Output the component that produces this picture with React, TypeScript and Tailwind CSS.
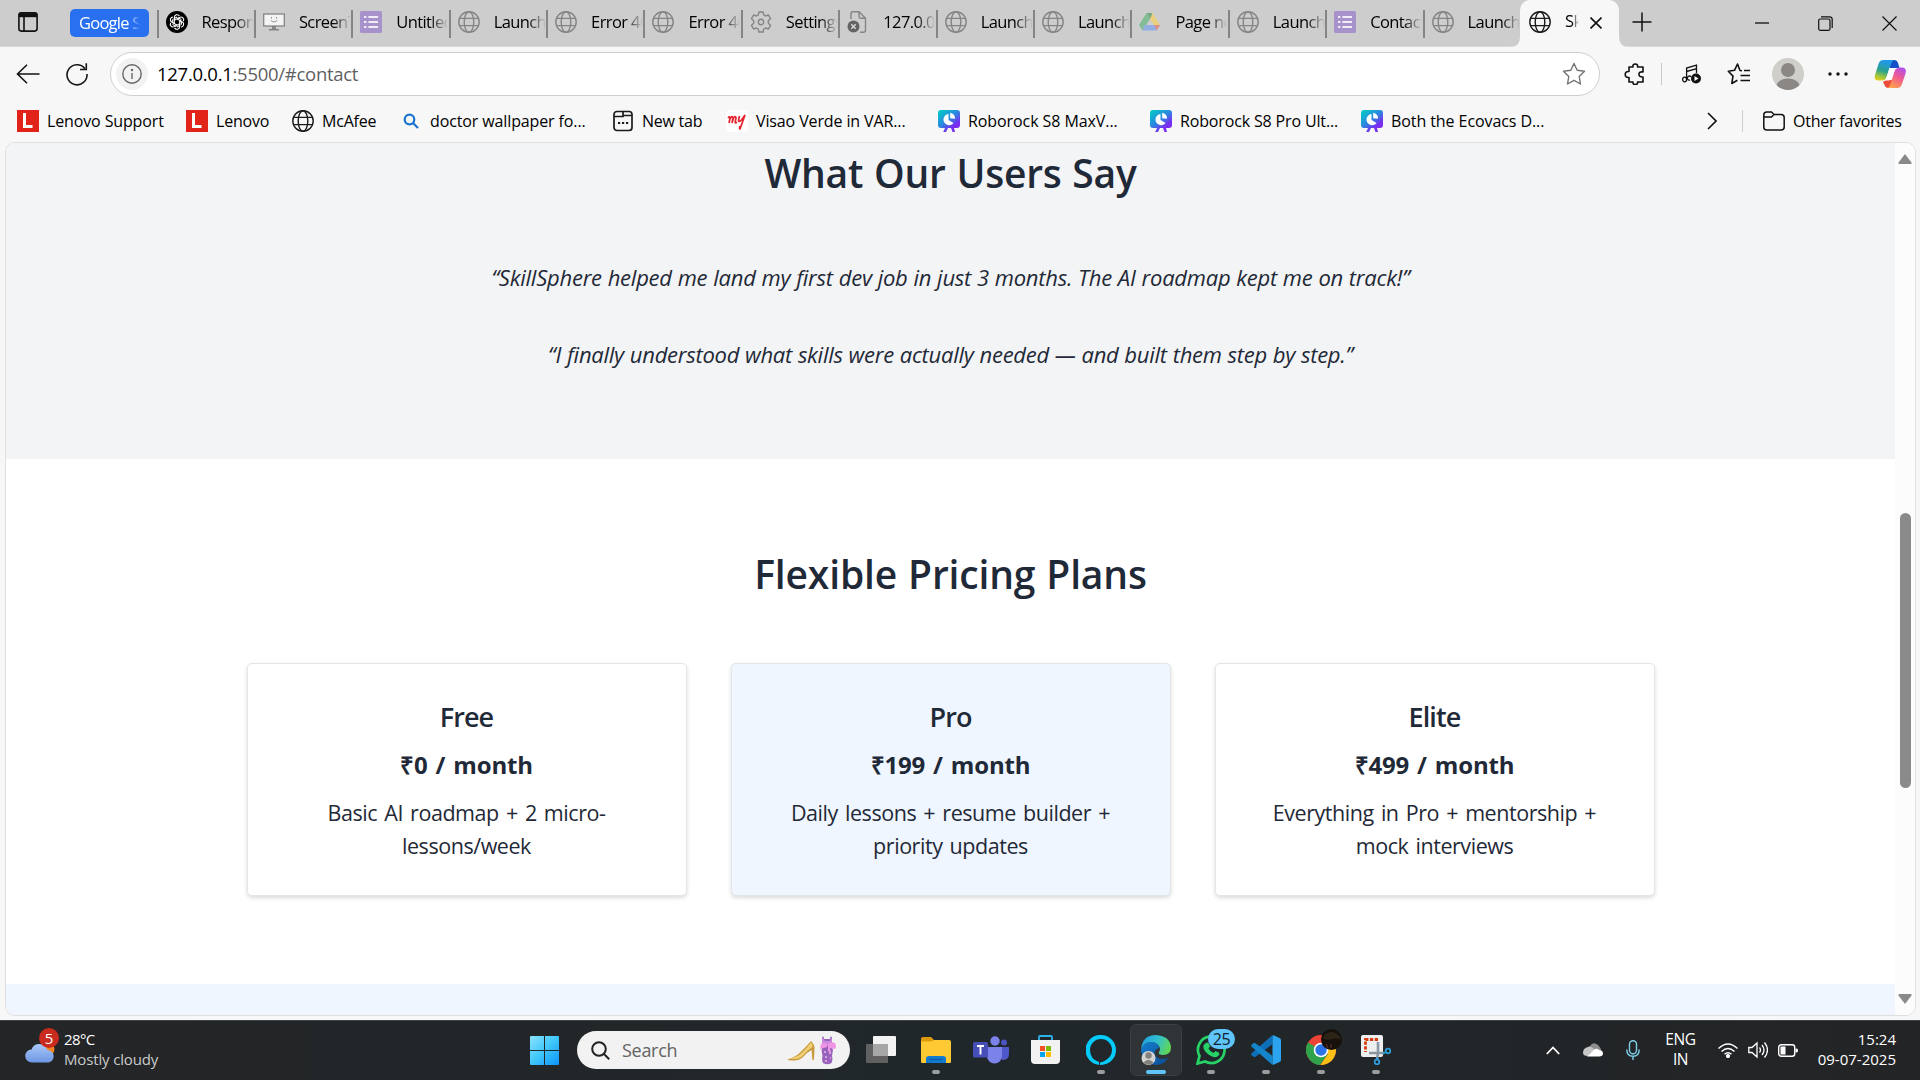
import type { ReactNode } from "react";

type IconProps = { className?: string };

const Globe = ({ className = "" }: IconProps) => (
  <svg viewBox="0 0 22 22" className={`size-[22px] shrink-0 ${className}`} fill="none" stroke="currentColor" strokeWidth="1.4">
    <circle cx="11" cy="11" r="10.2" />
    <ellipse cx="11" cy="11" rx="4.8" ry="10.2" />
    <path d="M1.6 7.4h18.8M1.6 14.6h18.8" />
  </svg>
);

const FormIcon = () => (
  <svg viewBox="0 0 22 22" className="size-[22px] shrink-0">
    <rect width="22" height="22" rx="1.5" fill="#a792cb" />
    <path d="M4 6h2.4M4 11h2.4M4 16h2.4M8.4 6H18M8.4 11H18M8.4 16H18" stroke="#f1ecf8" strokeWidth="2.2" />
  </svg>
);

const GptIcon = () => (
  <svg viewBox="0 0 22 22" className="size-[22px] shrink-0">
    <circle cx="11" cy="11" r="11" fill="#000" />
    <g fill="none" stroke="#fff" strokeWidth="1.1">
      {[0, 60, 120, 180, 240, 300].map((a) => (
        <path key={a} transform={`rotate(${a} 11 11)`} d="M8.4 9.5V6.3c0-2.6 3.6-3.6 5-1.2M8.4 9.4l4.2-2.5 2.9 1.7" />
      ))}
    </g>
  </svg>
);

const ScreenIcon = () => (
  <svg viewBox="0 0 22 22" className="size-[22px] shrink-0">
    <rect x=".7" y="3" width="20.6" height="12" fill="#f4f4f4" stroke="#848484" strokeWidth="1.3" />
    <path d="M9 15h4v3h3v1.5H6V18h3z" fill="#848484" />
    <path d="M8.5 6v1.6M13.5 6v1.6M8 9.3c1 2 5 2 6 0" stroke="#8d8d8d" fill="none" />
  </svg>
);

const GearIcon = () => (
  <svg viewBox="0 0 22 22" className="size-[22px] shrink-0" fill="none" stroke="#858585" strokeWidth="1.4" strokeLinejoin="round">
    <path d="M8.9 1h4.2l.6 2.9 1.9 1.1 2.8-1 2.1 3.7-2.2 2v2.6l2.2 2-2.1 3.7-2.8-1-1.9 1.1-.6 2.9H8.9l-.6-2.9L6.4 17l-2.8 1-2.1-3.7 2.2-2V9.7l-2.2-2L3.6 4l2.8 1 1.9-1.1z" />
    <circle cx="11" cy="11" r="2.7" />
  </svg>
);

const BrokenPage = () => (
  <svg viewBox="0 0 22 22" className="size-[22px] shrink-0" fill="none" stroke="#858585" strokeWidth="1.4">
    <path d="M4 8V2.5Q4 .8 5.7.8H12l6.5 6.5v12q0 2-2 2H13M12 .8v4.8q0 1.700 1.700 1.700h4.800" />
    <circle cx="6.500" cy="15.500" r="6" fill="#636363" stroke="none" />
    <path d="m4.300 13.300 4.400 4.400m0-4.400-4.400 4.400" stroke="#d8d8d8" />
  </svg>
);

const DriveIcon = () => (
  <svg viewBox="0 0 22 22" className="size-[22px] shrink-0">
    <path d="M7.500 2h6l7.500 12h-6z" fill="#ead07e" />
    <path d="M7.500 2 0 14l3.500 5.500L11 8z" fill="#83bd95" />
    <path d="M5.500 14H21l-3.500 5.500h-14z" fill="#92aee2" />
    <path d="M15 14h6l-3.200 5.200z" fill="#dc8f87" />
    <path d="M7.500 2h6L11 8z" fill="#78a987" />
  </svg>
);

const LenovoIcon = () => (
  <div className="flex size-[22px] shrink-0 items-center justify-center bg-[#e2231a]">
    <svg viewBox="0 0 12 16" className="h-4 w-3">
      <path d="M2.500 0v13.500h8" fill="none" stroke="#fff" strokeWidth="3" />
    </svg>
  </div>
);

const RoboIcon = () => (
  <svg viewBox="0 0 22 22" className="size-[22px] shrink-0">
    <defs>
      <linearGradient id="robo" x1="0" y1="0" x2=".8" y2="1">
        <stop offset="0" stopColor="#00d2c4" />
        <stop offset=".5" stopColor="#2b86e0" />
        <stop offset=".8" stopColor="#7a2cf0" />
      </linearGradient>
    </defs>
    <path d="M3 0h16q3 0 3 3v12q0 3-3 3h-3l1 4h-2.500L13 18h-3l-2 4H5.200L7 18H3q-3 0-3-3V3q0-3 3-3z" fill="url(#robo)" />
    <path d="M10.500 4v6l5 3A5.600 5.600 0 1 1 10.500 4z" fill="#fff" />
    <path d="M12.200 2.800a5.600 5.600 0 0 1 4.800 6l-4.800-.5z" fill="#fff" />
  </svg>
);

const tabs: { icon: ReactNode; label: string }[] = [
  { icon: <GptIcon />, label: "Respons" },
  { icon: <ScreenIcon />, label: "ScreenTo" },
  { icon: <FormIcon />, label: "Untitled" },
  { icon: <Globe className="text-[#858585]" />, label: "Launchp" },
  { icon: <Globe className="text-[#858585]" />, label: "Error 404" },
  { icon: <Globe className="text-[#858585]" />, label: "Error 404" },
  { icon: <GearIcon />, label: "Settings" },
  { icon: <BrokenPage />, label: "127.0.0.1" },
  { icon: <Globe className="text-[#858585]" />, label: "Launchp" },
  { icon: <Globe className="text-[#858585]" />, label: "Launchp" },
  { icon: <DriveIcon />, label: "Page not" },
  { icon: <Globe className="text-[#858585]" />, label: "Launchp" },
  { icon: <FormIcon />, label: "Contact" },
  { icon: <Globe className="text-[#858585]" />, label: "Launchp" },
];

const TabStrip = () => (
  <div className="flex h-[47px] items-stretch border-b border-[#d9d9d9] bg-[#cdcdcd] text-[16.500px] tracking-[-0.600px] text-black">
    <div className="flex w-[70px] items-center pl-[18px]">
      <svg viewBox="0 0 20 20" className="mt-[-2px] size-5" fill="none" stroke="#111" strokeWidth="1.600">
        <rect x=".9" y=".9" width="18.200" height="18.200" rx="2.500" />
        <path d="M1 3.200h18" strokeWidth="4" />
        <path d="M6 4v15" />
      </svg>
    </div>
    <div className="flex w-[86.500px] items-center">
      <div className="mt-[-1px] h-7 w-[79px] overflow-hidden rounded-[5px] bg-[#2970f0] pl-[9px] leading-[27px] whitespace-nowrap text-white">
        <span className="inline-block w-[61px] overflow-hidden mask-r-from-80% mask-r-to-100% tracking-[-0.750px]">Google S</span>
      </div>
    </div>
    {tabs.map((t, i) => (
      <div key={i} className="flex w-[97.400px] shrink-0 items-center">
        <div className="mt-[2px] h-7 w-0.5 shrink-0 bg-[#858585]" />
        <div className="-mt-0.5 ml-[7px]">{t.icon}</div>
        <div className="-mt-0.5 ml-[14px] w-[52px] shrink-0 overflow-hidden mask-r-from-65% mask-r-to-100% whitespace-nowrap">{t.label}</div>
      </div>
    ))}
    <div className="relative -mb-px flex w-[99px] shrink-0 items-center rounded-t-[10px] bg-[#f7f7f7] pl-[9px]">
      <svg viewBox="0 0 10 10" className="absolute bottom-0 -left-2.5 size-2.5"><path d="M10 0v10H0Q10 10 10 0z" fill="#f7f7f7" /></svg>
      <svg viewBox="0 0 10 10" className="absolute -right-2.5 bottom-0 size-2.5"><path d="M0 0v10h10Q0 10 0 0z" fill="#f7f7f7" /></svg>
      <Globe className="-mt-1 text-[#1b1b1b]" />
      <div className="-mt-1 ml-[14px] w-[14px] overflow-hidden mask-r-from-50% mask-r-to-100%">Skill</div>
      <svg viewBox="0 0 12 12" className="-mt-px ml-[11px] size-3" stroke="#111" strokeWidth="1.600"><path d="m.5.5 11 11m0-11-11 11" /></svg>
    </div>
    <div className="flex flex-1 items-center">
      <svg viewBox="0 0 20 20" className="-mt-0.5 ml-[13px] size-5" stroke="#111" strokeWidth="1.500"><path d="M10 .5v19M.5 10h19" /></svg>
      <svg viewBox="0 0 14 14" className="ml-[103px] size-3.5" stroke="#111" strokeWidth="1.300"><path d="M0 7h14" /></svg>
      <svg viewBox="0 0 15 15" className="ml-[49px] size-[15px]" fill="none" stroke="#111" strokeWidth="1.200">
        <rect x=".7" y="3" width="11.300" height="11.300" rx="1.500" /><path d="M3 .8h8.500q2.700 0 2.700 2.700V12" />
      </svg>
      <svg viewBox="0 0 15 15" className="ml-[49px] size-[15px]" stroke="#111" strokeWidth="1.200"><path d="m.5.5 14 14m0-14-14 14" /></svg>
    </div>
  </div>
);

const CopilotIcon = () => (
  <svg viewBox="0 0 32 30" className="h-[30px] w-8">
    <defs>
      <linearGradient id="cp1" x1=".3" y1="0" x2="0" y2="1"><stop offset="0" stopColor="#2098e8" /><stop offset=".45" stopColor="#2ba18d" /><stop offset=".75" stopColor="#a3c83a" /><stop offset="1" stopColor="#f8d012" /></linearGradient>
      <linearGradient id="cp2" x1=".8" y1="0" x2=".3" y2="1"><stop offset="0" stopColor="#b04ff0" /><stop offset=".45" stopColor="#ee5a92" /><stop offset="1" stopColor="#ffa04a" /></linearGradient>
    </defs>
    <path d="M12 21l-3 2 1.500 3q1 3 4 3H17l2-8z" fill="#ea4b3a" />
    <path d="M16 1h4q3 0 4 3l1.500 5H16z" fill="#1650c8" />
    <path d="M9.500 1H20q-2 1-3 4l-4.500 13q-1 3.500-4 3.500H4.500Q-.5 21.500 1 16L4.500 5q1.200-4 5-4z" fill="url(#cp1)" />
    <path d="M23 29H13.500q2-1 3-4l4-13q1-3.500 4-3.500h3.500q5 0 3.500 6L28 25q-1.200 4-5 4z" fill="url(#cp2)" />
    <path d="M16 9h8.500q-3 0-4 3l-2.500 7q-1 2.500-3.500 2.500H8.500q3 0 4-3L15 10.500q.3-1.500 1-1.500z" fill="#fff" />
  </svg>
);

const Toolbar = () => (
  <div className="flex h-[54px] items-center bg-[#f7f7f7]">
    <svg viewBox="0 0 24 20" className="ml-4 h-5 w-6" fill="none" stroke="#151515" strokeWidth="1.600"><path d="M23.500 10H2M11 .8 1.500 10l9.500 9.200" /></svg>
    <svg viewBox="0 0 24 24" className="ml-[25px] size-6" fill="none" stroke="#151515" strokeWidth="1.600"><path d="M19.800 6.500A10 10 0 1 0 22 12M21.300 1.200v6.300H15" /></svg>
    <div className="ml-[21px] flex h-[44px] w-[1490px] items-center rounded-full border border-[#cfcfcf] bg-white">
      <div className="ml-[5px] flex size-8 items-center justify-center rounded-full bg-[#f2f2f2]">
        <svg viewBox="0 0 20 20" className="size-5" fill="none" stroke="#666" strokeWidth="1.400"><circle cx="10" cy="10" r="9.200" /><path d="M10 9v6" /><circle cx="10" cy="6" r=".5" fill="#666" /></svg>
      </div>
      <div className="ml-[9px] flex-1 text-[18.500px] tracking-[-0.280px] text-[#5f5f5f]"><span className="text-black">127.0.0.1</span>:5500/#contact</div>
      <svg viewBox="0 0 24 24" className="mr-[13px] size-6" fill="none" stroke="#737373" strokeWidth="1.400" strokeLinejoin="round"><path d="m12 1.500 3.200 6.800 7.300 1-5.300 5.200 1.300 7.500-6.500-3.600L5.500 22l1.300-7.500L1.500 9.300l7.300-1z" /></svg>
    </div>
    <svg viewBox="0 0 22 22" className="ml-[24px] size-[22px]" fill="none" stroke="#111" strokeWidth="1.600" strokeLinejoin="round">
      <path d="M5 4h4q-.5-3 2.300-3T13.500 4H19v5q-4-.6-4 2.300T19 14v5h-5.500q.5 2.500-2.200 2.500T9 19H5v-4.500q-3.800.4-3.800-3T5 8.500z" />
    </svg>
    <div className="ml-[15px] h-[22px] w-px bg-[#c8c8c8]" />
    <svg viewBox="0 0 20 20" className="ml-[20px] size-5" fill="none" stroke="#111" strokeWidth="1.300">
      <ellipse cx="2.600" cy="15.500" rx="2" ry="2.300" /><path d="M4.600 15.500V4L14.500 1.200v8M4.600 7.500l9.900-2.800" /><path d="M8 16a2 2 0 1 1 1-3" />
      <circle cx="14" cy="14.500" r="5" fill="#111" stroke="none" /><path d="m12.500 12 4 2.500-4 2.500z" fill="#fff" stroke="none" />
    </svg>
    <svg viewBox="0 0 24 24" className="ml-[25px] size-6" fill="none" stroke="#111" strokeWidth="1.600" strokeLinejoin="round">
      <path d="M15 8.800 13 8.500 10.500 2 7.500 8.300 1.300 9.200l4.700 4.900-1.200 7.400 5.600-3.200M17 8.500h6M13.500 13.500H23M13.500 18.500H23" />
    </svg>
    <svg viewBox="0 0 32 32" className="ml-[21px] size-8"><defs><clipPath id="av"><circle cx="16" cy="16" r="16" /></clipPath></defs><g clipPath="url(#av)"><rect width="32" height="32" fill="#d0cecb" /><circle cx="16" cy="12" r="7" fill="#8a8784" /><ellipse cx="16" cy="28" rx="11.500" ry="7.500" fill="#8a8784" /></g></svg>
    <svg viewBox="0 0 20 4" className="ml-[24px] h-1 w-5" fill="#111"><circle cx="2" cy="2" r="1.700" /><circle cx="10" cy="2" r="1.700" /><circle cx="18" cy="2" r="1.700" /></svg>
    <div className="ml-[26px]"><CopilotIcon /></div>
  </div>
);

const Bookmark = ({ icon, label, box }: { icon: ReactNode; label: string; box: string }) => (
  <div className={`flex shrink-0 items-center gap-2 whitespace-nowrap ${box}`}>{icon}<span>{label}</span></div>
);

const Bookmarks = () => (
  <div className="flex h-[41px] items-center bg-[#f7f7f7] pb-[2px] pl-[17px] text-[16px] text-black">
    <Bookmark box="w-[169px] tracking-[-0.130px]" icon={<LenovoIcon />} label="Lenovo Support" />
    <Bookmark box="w-[106px] tracking-[-0.200px]" icon={<LenovoIcon />} label="Lenovo" />
    <Bookmark box="w-[109px] tracking-[-0.200px]" icon={<Globe className="text-[#1b1b1b]" />} label="McAfee" />
    <Bookmark
      box="w-[211px] tracking-[-0.120px]"
      icon={<svg viewBox="0 0 21 22" className="h-[22px] w-[21px] shrink-0" fill="none" stroke="#1b74cf" strokeWidth="2.200"><circle cx="8.500" cy="9.500" r="4.800" /><path d="m12 13 5 5" /></svg>}
      label="doctor wallpaper fo..."
    />
    <Bookmark
      box="w-[114px] tracking-[-0.250px]"
      icon={<svg viewBox="0 0 22 22" className="size-[22px] shrink-0" fill="none" stroke="#1b1b1b" strokeWidth="1.700"><rect x="2" y="1.500" width="18" height="19" rx="3" /><path d="M2 6.500h9V2M11 5.500h9" /><path d="M6 13h2.200M10 13h2.200M14 13h2.200" strokeWidth="2.200" /></svg>}
      label="New tab"
    />
    <Bookmark
      box="w-[212px] tracking-[-0.120px]"
      icon={<svg viewBox="0 0 22 22" className="size-[22px] shrink-0"><rect width="22" height="22" rx="4" fill="#fff" /><path d="M2 8q2-2.500 2 .500L3 13l1-4q2-4 3-1l-1 5 1.500-5q2-3 2.500 0l-.8 4q0 2 1.800 0M13.500 6l-1 4.500q.5 2 3-.5l3.500-5L14 19q-1 0 0-3" fill="none" stroke="#e5232e" strokeWidth="1.700" /></svg>}
      label="Visao Verde in VAR..."
    />
    <Bookmark box="w-[212px] tracking-[-0.080px]" icon={<RoboIcon />} label="Roborock S8 MaxV..." />
    <Bookmark box="w-[211px] tracking-[-0.150px]" icon={<RoboIcon />} label="Roborock S8 Pro Ult..." />
    <Bookmark box="w-[346px] tracking-[-0.080px]" icon={<RoboIcon />} label="Both the Ecovacs D..." />
    <svg viewBox="0 0 10 18" className="h-[18px] w-2.5" fill="none" stroke="#111" strokeWidth="1.600"><path d="m1 1 8 8-8 8" /></svg>
    <div className="ml-[25px] h-[22px] w-px bg-[#d0d0d0]" />
    <svg viewBox="0 0 22 20" className="ml-[20px] h-5 w-[22px]" fill="none" stroke="#111" strokeWidth="1.500"><path d="M.8 4q0-3 3-3h4.700l2.500 2.500h7q3.200 0 3.200 3V16q0 3-3.200 3H3.800q-3 0-3-3zM.8 6h7.700L11 3.500" /></svg>
    <span className="ml-[8px] tracking-[-0.250px] whitespace-nowrap">Other favorites</span>
  </div>
);

const plans = [
  { name: "Free", price: "₹0 / month", desc: ["Basic AI roadmap + 2 micro-", "lessons/week"], bg: "bg-white" },
  { name: "Pro", price: "₹199 / month", desc: ["Daily lessons + resume builder +", "priority updates"], bg: "bg-[#eff6ff]" },
  { name: "Elite", price: "₹499 / month", desc: ["Everything in Pro + mentorship +", "mock interviews"], bg: "bg-white" },
];

const Page = () => (
  <main className="flex-1 text-center text-[#1f2937]">
    <section className="h-[316px] bg-[#f3f4f6] pt-[5px]">
      <h2 className="text-[39px] leading-[50px] font-semibold tracking-[-0.250px] [word-spacing:1px]">What Our Users Say</h2>
      <p className="mt-[62px] text-[22px] leading-[34px] tracking-[-0.240px] italic [word-spacing:0.400px]">“SkillSphere helped me land my first dev job in just 3 months. The AI roadmap kept me on track!”</p>
      <p className="mt-[43px] text-[22px] leading-[34px] tracking-[-0.260px] italic [word-spacing:0.400px]">“I finally understood what skills were actually needed — and built them step by step.”</p>
    </section>
    <section className="h-[525px] bg-white pt-[90px]">
      <h2 className="text-[39px] leading-[50px] font-semibold tracking-[-0.150px] [word-spacing:1px]">Flexible Pricing Plans</h2>
      <div className="mt-[64px] flex justify-center gap-11">
        {plans.map((p) => (
          <div key={p.name} className={`h-[233px] w-[440px] rounded-[5px] border border-[#e3e5e8] pt-[33px] shadow-[0_2px_4px_rgba(0,0,0,0.14)] ${p.bg}`}>
            <h3 className="text-[27px] leading-10 font-semibold tracking-[-0.900px]">{p.name}</h3>
            <p className="mt-[8px] text-[24px] leading-10 font-bold tracking-[-0.200px] [word-spacing:2px]">{p.price}</p>
            <p className="mt-[11px] text-[21.500px] leading-[33px] tracking-[-0.450px] [word-spacing:2px]">{p.desc[0]}<br />{p.desc[1]}</p>
          </div>
        ))}
      </div>
    </section>
    <section className="h-[31px] bg-[#eff6ff]" />
  </main>
);

const Scrollbar = () => (
  <div className="flex w-5 flex-col items-center bg-[#fcfcfc] pt-[11px] text-[#8a8a8a]">
    <svg viewBox="0 0 14 10" className="h-2.5 w-3.5" fill="currentColor"><path d="M7 0 13.500 8.500q.5 1.500-1 1.500h-11q-1.500 0-1-1.500z" /></svg>
    <div className="mt-[349px] h-[275px] w-[11px] rounded-full bg-[#8a8a8a]" />
    <svg viewBox="0 0 14 10" className="mt-[206px] h-2.5 w-3.5" fill="currentColor"><path d="M7 10 13.500 1.500q.5-1.500-1-1.500h-11q-1.500 0-1 1.500z" /></svg>
  </div>
);

const Slot = ({ children, active = false, dot = true }: { children: ReactNode; active?: boolean; dot?: boolean }) => (
  <div className={`relative mx-[2.500px] flex h-[50px] w-[50px] shrink-0 items-center justify-center rounded-[5px] ${active ? "bg-[#2f3437] outline outline-[#3a3f42]" : ""}`}>
    {children}
    {dot && <div className={`absolute bottom-px h-1 rounded-full ${active ? "w-5 bg-[#5fc5fb]" : "w-2 bg-[#9a9c9d]"}`} />}
  </div>
);

const Taskbar = () => (
  <div className="flex h-[60px] items-center border-t border-[#3f4345] bg-linear-to-r from-[#242526] via-[#20272b] to-[#232425] pb-px text-[15px] leading-5 text-white">
    <div className="relative ml-[25px] h-[38px] w-[38px]">
      <svg viewBox="0 0 38 38" className="size-[38px]">
        <defs><linearGradient id="cl" x1="0" y1="0" x2="0" y2="1"><stop offset="0" stopColor="#a8c8f8" /><stop offset="1" stopColor="#6e97e4" /></linearGradient></defs>
        <circle cx="22" cy="18" r="7.500" fill="#f58220" />
        <path d="M7 31.500a6.500 6.500 0 0 1-.5-13A8.500 8.500 0 0 1 22.500 19a6.300 6.300 0 0 1 1 12.500z" fill="url(#cl)" />
      </svg>
      <div className="absolute -top-[3px] left-[14px] flex size-5 items-center justify-center rounded-full bg-[#c92b1e] text-[15px]">5</div>
    </div>
    <div className="mb-[3px] ml-px w-[467px]"><div className="h-[20px] tracking-[-0.600px]">28°C</div><div className="tracking-[-0.150px] text-[#c9cbcc]">Mostly cloudy</div></div>
    <svg viewBox="0 0 29 29" className="-ml-px size-[29px] shrink-0">
      <defs><linearGradient id="win" x1="0" y1="0" x2="1" y2="1"><stop offset="0" stopColor="#8be3fc" /><stop offset=".5" stopColor="#3fc6fb" /><stop offset="1" stopColor="#0b93f8" /></linearGradient></defs>
      <path d="M0 1q0-1 1-1h13v14H0zM15 0h13q1 0 1 1v13H15zM0 15h14v14H1q-1 0-1-1zM15 15h14v13q0 1-1 1H15z" fill="url(#win)" />
    </svg>
    <div className="ml-[18px] flex h-[38px] w-[273px] shrink-0 items-center rounded-full bg-[#f2f2f2] pl-[14px] text-[18px] text-[#636363]">
      <svg viewBox="0 0 19 19" className="size-[19px]" fill="none" stroke="#222" strokeWidth="2"><circle cx="8" cy="8" r="6.800" /><path d="m13 13 5.200 5.200" /></svg>
      <span className="mb-px ml-3 flex-1 tracking-[-0.300px]">Search</span>
      <svg viewBox="0 0 50 30" className="mr-[13px] h-[30px] w-[50px]">
        <path d="M.5 24.500Q8 22 12.500 18 19 12 24 6q4 4 3.500 8l-.6 11h-1.500l-.8-10q-4 2-7.500 6-3.600 4-8 4.300-6 .7-9.100-.8z" fill="#c99a3c" />
        <path d="M3 23.500q9 2 14-4 4-5 8.500-7.500.3-2.500-1.500-4.500-5 6.500-10 11-4 3.500-11 5z" fill="#f0cf74" />
        <path d="M36 1q1 1 1 3h6q0-2 1-3l1 2-.5 8 1.500 4-1 6q1 4-.5 7-4 2.500-8.500 0-1.500-3-.5-7l-1-6 1.500-4-1-8z" fill="#9a62bd" />
        <path d="M35 2l3 4h5l1-4 1 5-1 4h-7l-2-3z" fill="#c98bdc" />
        <path d="M41 9q4-3 7-1 2 3 0 6l-5-1 1 5-3-2zM40 9q-4-2-6 0l-1 5 7-2z" fill="#f095e6" />
        <path d="M37 17h2m3 1h2m-6 4h2m3 1h1m-6 3h2" stroke="#ddb8ec" strokeWidth="1.300" />
      </svg>
    </div>
    <div className="ml-[3.500px] flex">
      <Slot dot={false}>
        <svg viewBox="0 0 30 28" className="size-[30px]"><rect y="8" width="22" height="19" rx="1" fill="#606060" /><rect x="7" width="23" height="20" rx="1" fill="#f3f3f3" /><path d="M7 8h15v12H7z" fill="#a7a7a7" /></svg>
      </Slot>
      <Slot>
        <svg viewBox="0 0 30 27" className="h-[27px] w-[30px]"><path d="M0 2q0-2 2-2h8l3 3v4H0z" fill="#dd9a0a" /><path d="M0 4.500h10L13 3h15q2 0 2 2v20q0 1-1 1H1q-1 0-1-1z" fill="#fec933" /><path d="M5 26v-4q0-3 3-3h14q3 0 3 3v4z" fill="#1379ce" /><path d="M8.500 22.500h13" stroke="#0b55a3" /></svg>
      </Slot>
      <Slot dot={false}>
        <svg viewBox="0 0 36 28" className="h-7 w-9"><circle cx="31" cy="6.500" r="3" fill="#4c54c2" /><path d="M25 11h11v7q0 6-7 6z" fill="#4f58ca" /><circle cx="22" cy="5" r="4.700" fill="#7b83eb" /><path d="M14 11h15v9a7.500 7.500 0 0 1-15 0z" fill="#7b83eb" /><rect y="6" width="15" height="15.500" rx="1.500" fill="#464eb8" /><path d="M4 10h7M7.500 10v8.500" stroke="#fff" strokeWidth="1.900" /></svg>
      </Slot>
      <Slot dot={false}>
        <svg viewBox="0 0 29 30" className="-ml-px h-[30px] w-[29px]"><path d="M8 6V2q0-1 1-1h11q1 0 1 1v4" fill="none" stroke="#2ab4e8" strokeWidth="1.800" /><path d="M0 5h29v20q0 4-4 4H4q-4 0-4-4z" fill="#f2f2f2" /><path d="M9 11h5v5H9z" fill="#f25022" /><path d="M15 11h5v5h-5z" fill="#7fba00" /><path d="M9 17h5v5H9z" fill="#00a4ef" /><path d="M15 17h5v5h-5z" fill="#ffb900" /></svg>
      </Slot>
      <Slot>
        <svg viewBox="0 0 30 30" className="size-[30px]"><path fillRule="evenodd" d="M15 0a15 15 0 0 1 0 30q-1 0-2-.2V27Q4 24 4 15a11 11 0 1 1 22 0q0 6-6 10-3 2-6 2.500V30A15 15 0 0 1 15 0z" fill="#05cafc" /></svg>
      </Slot>
      <Slot active>
        <svg viewBox="0 0 30 30" className="size-[30px]">
          <defs>
            <linearGradient id="eg" x1="0" y1=".3" x2="1" y2=".6"><stop offset="0" stopColor="#1f9fe0" /><stop offset=".5" stopColor="#32c0cf" /><stop offset="1" stopColor="#62d84e" /></linearGradient>
            <linearGradient id="eb" x1="0" y1="0" x2="1" y2="1"><stop offset="0" stopColor="#1380d2" /><stop offset="1" stopColor="#0d4a94" /></linearGradient>
          </defs>
          <path d="M0 15q3-8 11-8 7 0 7 6-6 2-4 7 3 6 13 3-4 7-12 7Q2 29 0 15z" fill="url(#eb)" />
          <path d="M0 15Q1 0 15 0q14 1 15 12 0 8-8 8-5 0-4-3 2-3 0-6-2-4-8-4-7 0-10 8z" fill="url(#eg)" />
          <circle cx="7.500" cy="23" r="7" fill="#d5d3d0" /><circle cx="7.500" cy="20.500" r="3.200" fill="#85817e" /><path d="M2.500 27.500q5-5.500 10 0-5 4.500-10 0z" fill="#85817e" />
        </svg>
      </Slot>
      <Slot>
        <svg viewBox="0 0 30 30" className="size-[30px]"><path d="M1.500 28.500 3.500 21A13.300 13.300 0 1 1 9 26.500z" fill="none" stroke="#25d366" strokeWidth="2.700" /><path d="M10 8q2-1.500 3 1l1 2.500-1.500 2q1.500 3 5 4.500l2-2 3.500 1.800q1 1-.5 3-2.500 2.500-7 .5-6-3-8-8-.8-3.500 2.500-5.300z" fill="#25d366" /></svg>
        <div className="absolute top-1 left-[22px] flex h-5 w-[27px] items-center justify-center rounded-full bg-[#5fc5fb] text-[16px] tracking-[-0.500px] text-[#10222c]">25</div>
      </Slot>
      <Slot>
        <svg viewBox="0 0 30 30" className="size-[30px]"><path d="M21.500 0v9L4.500 21.800q-1 .8-2 0L.6 20.200q-1-1 0-2z" fill="#0d6fb8" /><path d="M21.500 30v-9L4.500 8.200q-1-.8-2 0L.6 9.800q-1 1 0 2z" fill="#1585cb" /><path d="m22.500.200 6.500 3q1 .5 1 2v19.600q0 1.500-1 2l-6.500 3q-1 0-1-1V1.200q0-1 1-1z" fill="#2ba3ee" /></svg>
      </Slot>
      <Slot>
        <svg viewBox="0 0 36 36" className="absolute top-[4px] left-[10px] size-9">
          <circle cx="15" cy="21" r="15" fill="#eb4335" />
          <path d="M15 21 2 13.500A15 15 0 0 0 14 36l8-11z" fill="#2fa24c" />
          <path d="M15 14h13.300A15 15 0 0 1 14.500 36L22 25z" fill="#fbc116" />
          <circle cx="15" cy="21" r="7.300" fill="#fff" /><circle cx="15" cy="21" r="5.700" fill="#2a74e8" />
          <circle cx="25.500" cy="10.500" r="10.500" fill="#17110d" /><path d="M17 9q4 3 9 1t9 1q-2-7-9-8-7 0-9 6z" fill="#2c2417" /><path d="M20 15l2 4m3-4v4" stroke="#5b2d25" strokeWidth="1.200" />
        </svg>
      </Slot>
      <Slot>
        <svg viewBox="0 0 30 30" className="size-[30px]"><rect width="22" height="22" rx="2" fill="#eeeff1" /><path d="M17 4.500H4.500V17" fill="none" stroke="#d83b0b" strokeWidth="2.800" strokeDasharray="3.300 1.500" /><path d="M17 7v11l-1 6M8 18h15" stroke="#8997a3" strokeWidth="2.600" fill="none" /><circle cx="27" cy="16" r="2.300" fill="none" stroke="#2b9fda" strokeWidth="1.800" /><circle cx="16" cy="27" r="2.300" fill="none" stroke="#2b9fda" strokeWidth="1.800" /><path d="m22 18.500 3-1.500M16.500 22.500 16.200 25" stroke="#2b9fda" strokeWidth="1.800" /></svg>
      </Slot>
    </div>
    <svg viewBox="0 0 14 9" className="ml-[142px] h-[9px] w-3.5" fill="none" stroke="#fff" strokeWidth="1.800"><path d="m.8 8 6.200-6.500L13.200 8" /></svg>
    <svg viewBox="0 0 20 14" className="ml-[23px] h-3.5 w-5"><path d="M4 10q-2-5 3-7 3-5 8-1 3 3 3 5z" fill="#8e8e8e" /><path d="M0 10q0-5 5-6 3-1 6 2L5 13q-5 0-5-3z" fill="#c6c6c6" /><path d="m4 13.500 7-7q3-1.500 5 .5 4 0 4 3.500 0 3-4 3z" fill="#fff" /></svg>
    <svg viewBox="0 0 14 20" className="ml-[23px] h-5 w-3.5" fill="none" stroke="#7fd0e8" strokeWidth="1.400"><rect x="3.500" y=".8" width="7" height="13" rx="3.500" /><path d="M.8 9.500q0 6.700 6.200 6.700t6.200-6.700M7 16v4" /></svg>
    <div className="mb-[2px] ml-[19px] w-11 text-center text-[15.500px] tracking-[-0.400px]">ENG<br />IN</div>
    <svg viewBox="0 0 20 15" className="ml-[15px] h-[15px] w-5" fill="none" stroke="#fff" strokeWidth="1.400"><path d="M.5 5.500q9.500-9 19 0M3.500 8.500q6.500-6 13 0M6.500 11.200q3.500-3 7 0" /><circle cx="10" cy="13" r="1.400" fill="#fff" /></svg>
    <svg viewBox="0 0 20 18" className="ml-[10px] h-[18px] w-5" fill="none" stroke="#fff" strokeWidth="1.300"><path d="M.8 6.500v5H4l5 4.500V2L4 6.500zM11.500 6.500q2 2.500 0 5M14 4q4 5 0 10M16.500 1.500q6 7.500 0 15" /></svg>
    <svg viewBox="0 0 20 13" className="ml-[10px] h-[13px] w-5"><rect x=".7" y=".7" width="16" height="11.600" rx="2.500" fill="none" stroke="#fff" strokeWidth="1.400" /><rect x="2.500" y="2.500" width="5" height="8" fill="#fff" /><path d="M17.500 4.500h1q1.500 0 1.500 2t-1.500 2h-1z" fill="#fff" /></svg>
    <div className="mr-6 mb-[3px] ml-auto text-right">15:24<br />09-07-2025</div>
  </div>
);

export default function App() {
  return (
    <div className="h-[1080px] w-[1920px] overflow-hidden bg-[#f7f7f7] font-['Open_Sans',sans-serif]">
      <TabStrip />
      <Toolbar />
      <Bookmarks />
      <div className="h-[878px] pl-[5px]">
        <div className="flex h-[874px] w-[1911px] overflow-hidden rounded-[10px] border border-[#dfdfdf] bg-white">
          <Page />
          <Scrollbar />
        </div>
      </div>
      <Taskbar />
    </div>
  );
}
